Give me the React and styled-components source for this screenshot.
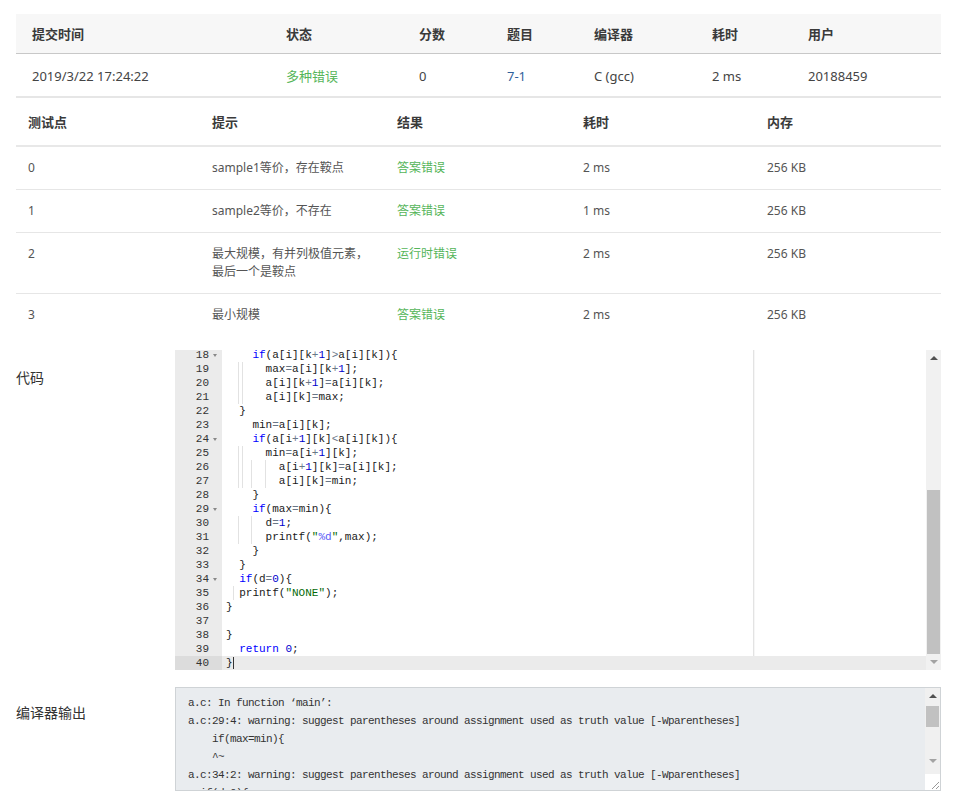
import React from "react";
import styled, { createGlobalStyle } from "styled-components";

const Global = createGlobalStyle`
  html, body { margin: 0; padding: 0; background: #fff; }
  body { font-family: "Noto Sans", "Open Sans", "Noto Sans CJK SC", sans-serif; color: #333; }
`;

const Page = styled.div`
  width: 957px;
  padding: 14px 16px 0;
  box-sizing: border-box;
`;

const SUMMARY_COLS = "254px 133px 88px 87px 118px 96px 1fr";
const TEST_COLS = "184px 185px 186px 184px 1fr";

const SummaryHead = styled.div`
  display: grid;
  grid-template-columns: ${SUMMARY_COLS};
  padding-left: 16px;
  height: 39px;
  align-items: center;
  background: #f7f7f7;
  border-bottom: 1px solid #c8c8c8;
  font-size: 13px;
  font-weight: 700;
  color: #3a3a3a;
`;

const SummaryRow = styled.div`
  display: grid;
  grid-template-columns: ${SUMMARY_COLS};
  padding: 1px 0 0 16px;
  height: 41px;
  align-items: center;
  border-bottom: 2px solid #e6e6e6;
  font-size: 13px;
  color: #444;
`;

const Status = styled.span`
  color: #55b559;
`;

const ProblemLink = styled.a`
  color: #30609b;
  text-decoration: none;
`;

const TestHead = styled.div`
  display: grid;
  grid-template-columns: ${TEST_COLS};
  padding-left: 12px;
  height: 47px;
  align-items: center;
  border-bottom: 2px solid #e8e8e8;
  font-size: 13px;
  font-weight: 700;
  color: #3a3a3a;
`;

const TestRow = styled.div`
  display: grid;
  grid-template-columns: ${TEST_COLS};
  padding: 12px 0 12px 12px;
  align-items: start;
  line-height: 18px;
  font-size: 12px;
  color: #555;
  border-bottom: ${(p) => (p.$last ? "none" : "1px solid #e6e6e6")};
`;

const Hint = styled.div`
  white-space: pre-line;
  padding-right: 10px;
`;

const Section = styled.div`
  display: grid;
  grid-template-columns: 159px 1fr;
  margin-top: ${(p) => p.$gap}px;
`;

const Label = styled.div`
  font-size: 14px;
  line-height: 20px;
  color: #333;
  padding-top: ${(p) => p.$top}px;
`;

/* ---------- editor ---------- */
const Editor = styled.div`
  display: flex;
  height: 320px;
  overflow: hidden;
  background: #fff;
  font-family: "Liberation Mono", "DejaVu Sans Mono", monospace;
  font-size: 11px;
`;

const Gutter = styled.div`
  width: 47px;
  flex: none;
  background: #ebebeb;
  color: #333;
  margin-top: -2px;
`;

const GutterCell = styled.div`
  display: flex;
  height: 14px;
  line-height: 14px;
  background: ${(p) => (p.$active ? "#dcdcdc" : "transparent")};
`;

const LineNo = styled.span`
  width: 34px;
  text-align: right;
  flex: none;
`;

const Fold = styled.span`
  width: 13px;
  display: flex;
  align-items: center;
  justify-content: center;
  &::after {
    content: "";
    display: ${(p) => (p.$show ? "block" : "none")};
    border-left: 2.5px solid transparent;
    border-right: 2.5px solid transparent;
    border-top: 3px solid #888;
    margin-left: -2px;
  }
`;

const CodeArea = styled.div`
  position: relative;
  flex: 1;
  min-width: 0;
`;

const CodeLines = styled.div`
  margin-top: -2px;
`;

const PrintMargin = styled.div`
  position: absolute;
  top: 0;
  bottom: 0;
  left: 531px;
  width: 1px;
  background: #e3e3e3;
  border-right: 1px solid #f6f6f6;
`;

const Line = styled.div`
  position: relative;
  height: 14px;
  line-height: 14px;
  padding-left: 4px;
  white-space: pre;
  color: #111;
  background: ${(p) => (p.$active ? "#ebebeb" : "transparent")};
`;

const Guide = styled.span`
  position: absolute;
  top: 0;
  bottom: 0;
  width: 1px;
  background: #e2e2e2;
`;

const Cursor = styled.span`
  display: inline-block;
  width: 1px;
  height: 12px;
  vertical-align: middle;
  background: #333;
`;

const Tok = styled.span`
  color: ${(p) =>
    ({
      kw: "#0000ff",
      num: "#0000cd",
      str: "#036a07",
      esc: "#585cf6",
      op: "#687687",
      plain: "#1a1a1a",
    }[p.$t])};
`;

const ScrollBar = styled.div`
  width: 15px;
  flex: none;
  display: flex;
  flex-direction: column;
  background: #f1f1f1;
`;

const ArrowBtn = styled.div`
  height: ${(p) => p.$h || 16}px;
  flex: none;
  display: flex;
  align-items: center;
  justify-content: center;
  &::after {
    content: "";
    border-left: 4px solid transparent;
    border-right: 4px solid transparent;
    ${(p) => (p.$down ? "border-top: 4px solid #a3a3a3;" : "border-bottom: 4px solid #505050;")}
  }
`;

const Track = styled.div`
  flex: ${(p) => (p.$fill ? 1 : "none")};
  height: ${(p) => (p.$fill ? "auto" : `${p.$h}px`)};
`;

const Thumb = styled.div`
  height: ${(p) => p.$h}px;
  flex: none;
  margin: 0 1px;
  background: #c1c1c1;
`;

/* ---------- compiler output ---------- */
const OutputBox = styled.div`
  display: flex;
  height: 102px;
  border: 1px solid #cfd3d6;
  background: #e9ecef;
  overflow: hidden;
`;

const OutputText = styled.pre`
  flex: 1;
  margin: 0;
  padding: 6px 12px 0;
  font-family: "Liberation Mono", "DejaVu Sans Mono", monospace;
  font-size: 11px;
  letter-spacing: -0.6px;
  line-height: 18px;
  color: #333;
  overflow: hidden;
`;

const OutScroll = styled(ScrollBar)`
  background: #f0f0f0;
`;

const ResizeCorner = styled.div`
  height: 16px;
  flex: none;
  background: #fff;
  display: flex;
  align-items: flex-end;
  justify-content: flex-end;
`;

/* ---------- data ---------- */
const summary = {
  time: "2019/3/22 17:24:22",
  status: "多种错误",
  score: "0",
  problem: "7-1",
  compiler: "C (gcc)",
  cost: "2 ms",
  user: "20188459",
};

const tests = [
  { id: "0", hint: "sample1等价，存在鞍点", result: "答案错误", time: "2 ms", mem: "256 KB" },
  { id: "1", hint: "sample2等价，不存在", result: "答案错误", time: "1 ms", mem: "256 KB" },
  { id: "2", hint: "最大规模，有并列极值元素，\n最后一个是鞍点", result: "运行时错误", time: "2 ms", mem: "256 KB" },
  { id: "3", hint: "最小规模", result: "答案错误", time: "2 ms", mem: "256 KB" },
];

const code = [
  { n: 18, t: "    if(a[i][k+1]>a[i][k]){", fold: true },
  { n: 19, t: "      max=a[i][k+1];", g: [2, 2.5] },
  { n: 20, t: "      a[i][k+1]=a[i][k];", g: [2, 2.5] },
  { n: 21, t: "      a[i][k]=max;", g: [2, 2.5] },
  { n: 22, t: "  }" },
  { n: 23, t: "    min=a[i][k];" },
  { n: 24, t: "    if(a[i+1][k]<a[i][k]){", fold: true },
  { n: 25, t: "      min=a[i+1][k];", g: [2, 2.5] },
  { n: 26, t: "        a[i+1][k]=a[i][k];", g: [2, 2.5, 4, 6] },
  { n: 27, t: "        a[i][k]=min;", g: [2, 2.5, 4, 6] },
  { n: 28, t: "    }" },
  { n: 29, t: "    if(max=min){", fold: true },
  { n: 30, t: "      d=1;", g: [2, 4] },
  { n: 31, t: "      printf(\"%d\",max);", g: [2, 4] },
  { n: 32, t: "    }" },
  { n: 33, t: "  }" },
  { n: 34, t: "  if(d=0){", fold: true },
  { n: 35, t: "  printf(\"NONE\");", g: [1.2] },
  { n: 36, t: "}" },
  { n: 37, t: "" },
  { n: 38, t: "}" },
  { n: 39, t: "  return 0;" },
  { n: 40, t: "}", active: true },
];

const output = `a.c: In function ‘main’:
a.c:29:4: warning: suggest parentheses around assignment used as truth value [-Wparentheses]
    if(max=min){
    ^~
a.c:34:2: warning: suggest parentheses around assignment used as truth value [-Wparentheses]
  if(d=0){`;

function tokenize(s) {
  const out = [];
  const re = /("(?:[^"\\]|\\.)*")|\b(if|return)\b|(\d+)|([=+<>]+)/g;
  let last = 0;
  let m;
  while ((m = re.exec(s))) {
    if (m.index > last) out.push(["plain", s.slice(last, m.index)]);
    if (m[1]) {
      const parts = m[1].split(/(%d)/);
      parts.forEach((p) => p && out.push([p === "%d" ? "esc" : "str", p]));
    } else if (m[2]) out.push(["kw", m[2]]);
    else if (m[3]) out.push(["num", m[3]]);
    else out.push(["op", m[4]]);
    last = re.lastIndex;
  }
  if (last < s.length) out.push(["plain", s.slice(last)]);
  return out;
}

const CH = 6.6;

function Scroll({ thumbBefore, thumb, as: Comp = ScrollBar, children }) {
  return (
    <Comp>
      <ArrowBtn />
      <Track $h={thumbBefore} />
      <Thumb $h={thumb} />
      <Track $fill />
      <ArrowBtn $down />
      {children}
    </Comp>
  );
}

export default function App() {
  return (
    <>
      <Global />
      <Page>
        <SummaryHead>
          <div>提交时间</div>
          <div>状态</div>
          <div>分数</div>
          <div>题目</div>
          <div>编译器</div>
          <div>耗时</div>
          <div>用户</div>
        </SummaryHead>
        <SummaryRow>
          <div>{summary.time}</div>
          <Status>{summary.status}</Status>
          <div>{summary.score}</div>
          <div>
            <ProblemLink href="#">{summary.problem}</ProblemLink>
          </div>
          <div>{summary.compiler}</div>
          <div>{summary.cost}</div>
          <div>{summary.user}</div>
        </SummaryRow>

        <TestHead>
          <div>测试点</div>
          <div>提示</div>
          <div>结果</div>
          <div>耗时</div>
          <div>内存</div>
        </TestHead>
        {tests.map((t, i) => (
          <TestRow key={t.id} $last={i === tests.length - 1}>
            <div>{t.id}</div>
            <Hint>{t.hint}</Hint>
            <Status>{t.result}</Status>
            <div>{t.time}</div>
            <div>{t.mem}</div>
          </TestRow>
        ))}

        <Section $gap={14}>
          <Label $top={18}>代码</Label>
          <Editor>
            <Gutter>
              {code.map((l) => (
                <GutterCell key={l.n} $active={l.active}>
                  <LineNo>{l.n}</LineNo>
                  <Fold $show={l.fold} />
                </GutterCell>
              ))}
            </Gutter>
            <CodeArea>
              <PrintMargin />
              <CodeLines>
                {code.map((l) => (
                  <Line key={l.n} $active={l.active}>
                    {(l.g || []).map((c) => (
                      <Guide key={c} style={{ left: 4 + c * CH - 1 }} />
                    ))}
                    {tokenize(l.t).map(([ty, tx], k) => (
                      <Tok key={k} $t={ty}>
                        {tx}
                      </Tok>
                    ))}
                    {l.active && <Cursor />}
                  </Line>
                ))}
              </CodeLines>
            </CodeArea>
            <Scroll thumbBefore={124} thumb={164} />
          </Editor>
        </Section>

        <Section $gap={17}>
          <Label $top={16}>编译器输出</Label>
          <OutputBox>
            <OutputText>{output}</OutputText>
            <Scroll thumbBefore={2} thumb={21} as={OutScroll}>
              <Track $h={5} />
              <ResizeCorner>
                <svg width="12" height="12" viewBox="0 0 12 12">
                  <path d="M11 4 L4 11 M11 8 L8 11" stroke="#999" strokeWidth="1" fill="none" />
                </svg>
              </ResizeCorner>
            </Scroll>
          </OutputBox>
        </Section>
      </Page>
    </>
  );
}
